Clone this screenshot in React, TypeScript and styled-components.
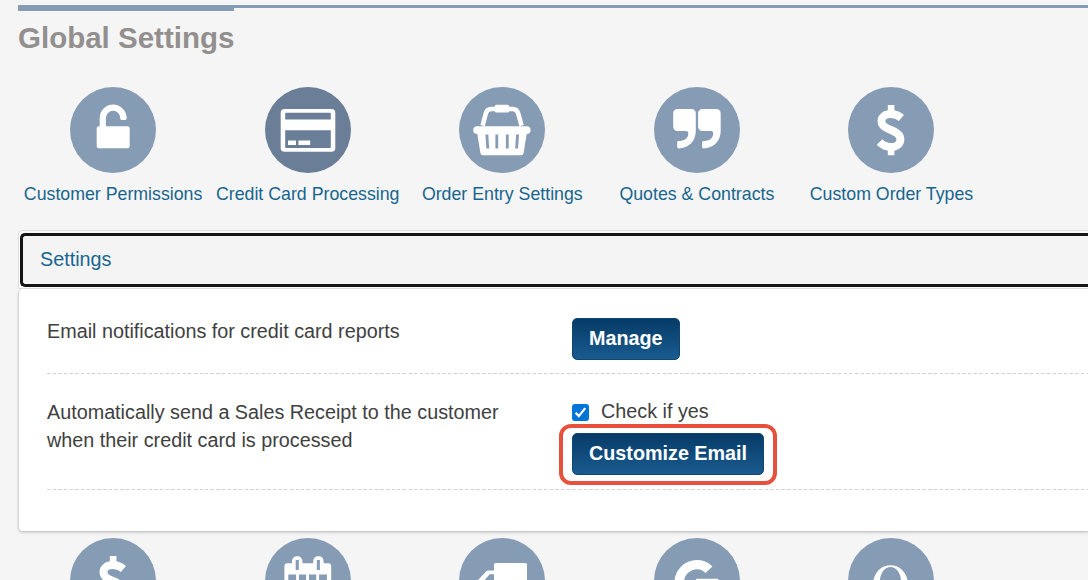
import React from "react";
import styled, { createGlobalStyle } from "styled-components";
import { FaGoogle } from "react-icons/fa";

type NavItem = { label: string; icon: React.ReactNode; active?: boolean };

const DollarIcon = () => (
  <svg viewBox="0 0 86 86">
    <path
      d="M53.4 31C50.4 28.4 46.6 27 42.8 27C37 27 33.5 30 33.5 34C33.5 39.2 38 41 43 43C48.4 45.2 52.4 47.4 52.4 52.4C52.4 57 48.6 60 43 60C38.5 60 34.4 58 31.5 55"
      fill="none"
      stroke="#fff"
      strokeWidth="7.9"
    />
    <path d="M39.8 18h6.6v9h-6.6zM39.8 59h6.6v9.3h-6.6z" fill="#fff" />
  </svg>
);

const LockIcon = () => (
  <svg viewBox="0 0 86 86" fill="#fff">
    <rect x="26.7" y="39.2" width="33" height="22" rx="2" />
    <path
      d="M32.8 41V31a10.3 10.3 0 0 1 20.6 0"
      fill="none"
      stroke="#fff"
      strokeWidth="6.2"
    />
    <rect x="50.3" y="28.5" width="6.2" height="4.4" rx="1.3" />
  </svg>
);

const CardIcon = () => (
  <svg viewBox="0 0 86 86" fill="#fff">
    <path
      fillRule="evenodd"
      d="M19.5 22h47a3.8 3.8 0 0 1 3.8 3.8v35.1a3.8 3.8 0 0 1-3.8 3.8h-47a3.8 3.8 0 0 1-3.8-3.8V25.8a3.8 3.8 0 0 1 3.8-3.8zM21 25.8a.8.8 0 0 0-.8.8v5.8h45.6v-5.8a.8.8 0 0 0-.8-.8zM20.2 43.3v16.9a.8.8 0 0 0 .8.8h44a.8.8 0 0 0 .8-.8V43.3z"
    />
    <path d="M23 53.6h8V58h-8zM33.4 53.6h11.8V58H33.4z" />
  </svg>
);

const BasketIcon = () => (
  <svg viewBox="0 0 86 86" fill="#fff">
    <path
      d="M23.6 38.6L26.8 26.5Q27.9 22 32.2 22H53.8Q58 22 59.2 26.5L62.6 38.6"
      fill="none"
      stroke="#fff"
      strokeWidth="4.6"
    />
    <rect x="35.8" y="17.8" width="14.4" height="7.8" rx="1.6" />
    <rect x="14.2" y="39.2" width="57.4" height="7.8" rx="3.9" />
    <path
      fillRule="evenodd"
      d="M18 45h50l-3.4 21a2.6 2.6 0 0 1-2.6 2.2H24a2.6 2.6 0 0 1-2.6-2.2zM26.4 47.4l1 14h2.8l-.9-14zM36.4 47.4v14h2.8v-14zM46.9 47.4v14h2.8v-14zM57.1 47.4l-.9 14h2.8l1-14z"
    />
  </svg>
);

const QuoteIcon = () => (
  <svg viewBox="0 0 86 86" fill="#fff">
    <path d="M23.4 22H37.6a4.2 4.2 0 0 1 4.2 4.2V44C41.8 54 34.5 61.4 24.6 61.4a1.4 1.4 0 0 1-1.4-1.4V55.4a1.4 1.4 0 0 1 1.4-1.4C30 54 34.3 51.4 34.3 46.4 34.3 44.8 33.4 44 31.8 44H23.4a4.2 4.2 0 0 1-4.2-4.2V26.2A4.2 4.2 0 0 1 23.4 22z" />
    <path
      transform="translate(24.9)"
      d="M23.4 22H37.6a4.2 4.2 0 0 1 4.2 4.2V44C41.8 54 34.5 61.4 24.6 61.4a1.4 1.4 0 0 1-1.4-1.4V55.4a1.4 1.4 0 0 1 1.4-1.4C30 54 34.3 51.4 34.3 46.4 34.3 44.8 33.4 44 31.8 44H23.4a4.2 4.2 0 0 1-4.2-4.2V26.2A4.2 4.2 0 0 1 23.4 22z"
    />
  </svg>
);

const CalendarIcon = () => (
  <svg viewBox="0 0 86 86">
    <rect x="19.4" y="25.3" width="46.8" height="43" rx="3" fill="#fff" />
    <rect x="27" y="18.3" width="10.4" height="15" rx="4.6" fill="#fff" />
    <rect x="48.2" y="18.3" width="10.4" height="15" rx="4.6" fill="#fff" />
    <path
      d="M30.7 22h3.1v10h-3.1zM51.8 22h3.1v10h-3.1zM23.3 36.6h7.8V44h-7.8zM33.9 36.6h7.2V44h-7.2zM44 36.6h7.2V44H44zM54.1 36.6h7.8V44h-7.8z"
      fill="#869bb4"
    />
  </svg>
);

const TruckIcon = () => (
  <svg viewBox="0 0 86 86" fill="#fff">
    <path d="M36.6 25h29.8a1.6 1.6 0 0 1 1.6 1.6V60H35V26.6a1.6 1.6 0 0 1 1.6-1.6z" />
    <path
      fillRule="evenodd"
      d="M36 32.4h-5.8q-2 0-3.4 1.4l-7 7.4q-1.6 1.6-1.6 4V60H36zM35 36.3h-4.3l-6.4 7.2v1.8H35z"
    />
  </svg>
);

const RingIcon = () => (
  <svg viewBox="0 0 86 86" fill="#fff">
    <path
      fillRule="evenodd"
      d="M42.5 27.3c10 0 17.6 8.6 17.6 20s-7.6 20-17.6 20-17.6-8.6-17.6-20 7.6-20 17.6-20zm0 1.8c-6.6 0-11 7-11 18.2s4.4 18.2 11 18.2 11-7 11-18.2-4.4-18.2-11-18.2z"
    />
  </svg>
);

const topItems: NavItem[] = [
  { label: "Customer Permissions", icon: <LockIcon /> },
  { label: "Credit Card Processing", icon: <CardIcon />, active: true },
  { label: "Order Entry Settings", icon: <BasketIcon /> },
  { label: "Quotes & Contracts", icon: <QuoteIcon /> },
  { label: "Custom Order Types", icon: <DollarIcon /> },
];

export default function App() {
  return (
    <>
      <GlobalStyle />
      <Page>
        <Header>
          <Title>Global Settings</Title>
        </Header>
        <IconNav>
          {topItems.map((item) => (
            <NavLink key={item.label}>
              <Circle $active={item.active}>{item.icon}</Circle>
              <NavLabel>{item.label}</NavLabel>
            </NavLink>
          ))}
        </IconNav>
        <AccordionFrame>
          <AccordionHeader>Settings</AccordionHeader>
        </AccordionFrame>
        <Panel>
          <Row $height={85}>
            <RowText>Email notifications for credit card reports</RowText>
            <Controls>
              <Button>Manage</Button>
            </Controls>
          </Row>
          <Row $height={116}>
            <RowText $top={24}>
              Automatically send a Sales Receipt to the customer
              <br />
              when their credit card is processed
            </RowText>
            <Controls $top={23}>
              <CheckLabel>
                <CheckBox>
                  <svg viewBox="0 0 17 17">
                    <path
                      d="M3.6 8.8l3.2 3.3 6.4-8"
                      fill="none"
                      stroke="#fff"
                      strokeWidth="2.3"
                    />
                  </svg>
                </CheckBox>
                Check if yes
              </CheckLabel>
              <Highlight>
                <Button>Customize Email</Button>
              </Highlight>
            </Controls>
          </Row>
        </Panel>
        <IconNav>
          <NavLink>
            <Circle>
              <DollarIcon />
            </Circle>
          </NavLink>
          <NavLink>
            <Circle>
              <CalendarIcon />
            </Circle>
          </NavLink>
          <NavLink>
            <Circle>
              <TruckIcon />
            </Circle>
          </NavLink>
          <NavLink>
            <Circle>
              <GoogleMark />
            </Circle>
          </NavLink>
          <NavLink>
            <Circle>
              <RingIcon />
            </Circle>
          </NavLink>
        </IconNav>
      </Page>
    </>
  );
}

const GlobalStyle = createGlobalStyle`
  * {
    box-sizing: border-box;
  }
  body {
    margin: 0;
    background: #f5f5f5;
    overflow: hidden;
  }
`;

const Page = styled.div`
  width: 1088px;
  height: 580px;
  padding: 5px 0 0 18px;
  overflow: hidden;
  background: #f5f5f5;
  font-family: "Liberation Sans", Arial, sans-serif;
  font-size: 19.78px;
  color: #404041;
`;

const Header = styled.header`
  height: 82px;
  border-top: 3px solid #869bb4;
`;

const Title = styled.h1`
  display: inline-block;
  margin: 0;
  padding-top: 10px;
  border-top: 3px solid #869bb4;
  font-size: 29.5px;
  line-height: 34px;
  color: #928f8e;
  white-space: nowrap;
`;

const IconNav = styled.nav`
  display: flex;
  margin-left: -2.2px;
`;

const NavLink = styled.a`
  display: flex;
  flex-direction: column;
  align-items: center;
  flex: 0 0 194.6px;
  color: #17658f;
`;

const Circle = styled.div<{ $active?: boolean }>`
  display: flex;
  align-items: center;
  justify-content: center;
  width: 86px;
  height: 86px;
  border-radius: 50%;
  background: ${(props) => (props.$active ? "#6a7e98" : "#869bb4")};

  svg[viewBox="0 0 86 86"] {
    width: 86px;
    height: 86px;
  }
`;

const GoogleMark = styled(FaGoogle)`
  width: 45px;
  height: 45px;
  margin-top: 2px;
  color: #fff;
  stroke: #fff;
  stroke-width: 14px;
  overflow: visible;
`;

const NavLabel = styled.span`
  margin-top: 11px;
  font-size: 17.75px;
  line-height: 21px;
  white-space: nowrap;
`;

const AccordionFrame = styled.div`
  height: 59px;
  margin-top: 25px;
  padding: 2px 0 1px 1px;
  border: 1px solid #dedede;
  border-right: 0;
  border-radius: 5px 0 0 0;
  background: #fafafa;
`;

const AccordionHeader = styled.div`
  height: 54px;
  padding-left: 17px;
  border: 3px solid #151515;
  border-right: 0;
  border-radius: 5px 0 0 5px;
  background: #f4f4f4;
  color: #17658f;
  line-height: 46px;
`;

const Panel = styled.section`
  height: 243px;
  margin-bottom: 6px;
  padding-left: 28px;
  border-left: 1px solid #d6d6d6;
  border-bottom: 1px solid #c9c9c9;
  border-radius: 5px 0 0 5px;
  background: #fff;
  box-shadow: 0 1px 3px rgba(0, 0, 0, 0.14);
`;

const Row = styled.div<{ $height: number }>`
  display: flex;
  height: ${(props) => props.$height}px;
  background: repeating-linear-gradient(
      90deg,
      #d2d2d2 0 3.2px,
      #f6f6f6 3.2px 5.65px
    )
    left bottom / 100% 1.5px no-repeat;
`;

const RowText = styled.div<{ $top?: number }>`
  width: 525px;
  padding-top: ${(props) => props.$top ?? 28}px;
  line-height: 28px;
  white-space: nowrap;
`;

const Controls = styled.div<{ $top?: number }>`
  display: flex;
  flex-direction: column;
  align-items: flex-start;
  padding-top: ${(props) => props.$top ?? 29}px;
`;

const Button = styled.button`
  height: 42px;
  padding: 0 16px 2px;
  border: 1px solid #0f4674;
  border-radius: 5px;
  background: linear-gradient(#063b67, #1a5b90);
  color: #fff;
  font: bold 19.75px "Liberation Sans", Arial, sans-serif;
  white-space: nowrap;
`;

const CheckLabel = styled.label`
  display: flex;
  align-items: center;
  gap: 12px;
  height: 28px;
`;

const CheckBox = styled.span`
  width: 17px;
  height: 17px;
  margin-top: 2px;
  border-radius: 3px;
  background: #0075d8;

  svg {
    display: block;
  }
`;

const Highlight = styled.div`
  margin: -1px 0 0 -13px;
  padding: 5px 9px 6px;
  border: 4px solid #e6503c;
  border-radius: 12px;
`;
